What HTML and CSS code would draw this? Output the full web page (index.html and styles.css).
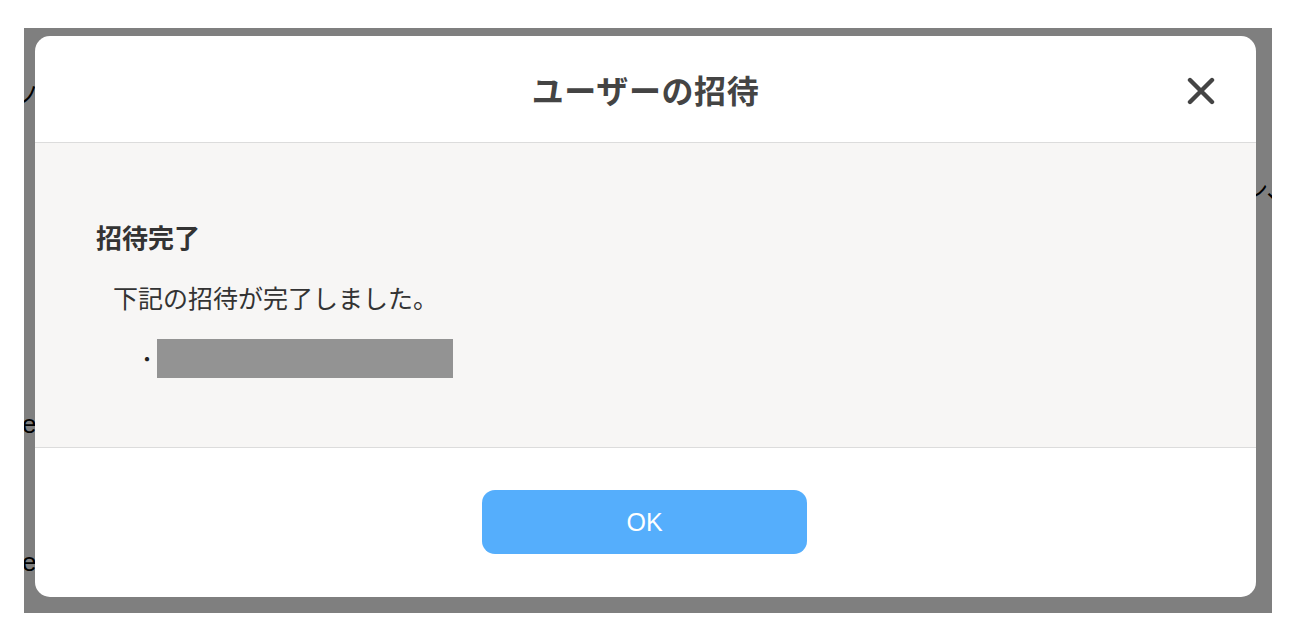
FILE: index.html
```html
<!DOCTYPE html>
<html lang="ja">
<head>
<meta charset="utf-8">
<title>ユーザーの招待</title>
<link rel="stylesheet" href="styles.css">
</head>
<body>
<div class="page">
  <span class="frag frag-a">ノ</span>
  <span class="frag frag-b">ン、</span>
  <span class="frag frag-c">e</span>
  <span class="frag frag-d">e</span>
</div>
<div class="backdrop">
  <div class="modal">
    <header class="modal-header">
      <h1 class="modal-title">ユーザーの招待</h1>
      <button class="close" aria-label="閉じる">
        <svg width="28" height="28" viewBox="0 0 28 28"><path d="M3 3 L25 25 M25 3 L3 25" stroke="#444" stroke-width="4.4" stroke-linecap="round" fill="none"/></svg>
      </button>
    </header>
    <section class="modal-body">
      <h2 class="done-title">招待完了</h2>
      <p class="done-text">下記の招待が完了しました。</p>
      <ul class="list">
        <li class="list-item"><span class="dot">・</span><span class="masked"></span></li>
      </ul>
    </section>
    <footer class="modal-footer">
      <button class="ok">OK</button>
    </footer>
  </div>
</div>
</body>
</html>
```
FILE: styles.css
```css
html, body {
  margin: 0;
  padding: 0;
  background: #fff;
}
body {
  width: 1290px;
  height: 638px;
  overflow: hidden;
  font-family: "Noto Sans CJK JP", "Noto Sans", sans-serif;
  position: relative;
}
.page {
  position: absolute;
  left: 24px;
  top: 28px;
  width: 1248px;
  height: 585px;
  overflow: hidden;
}
.frag {
  position: absolute;
  color: #000;
  font-family: "Liberation Sans", "Noto Sans CJK JP", sans-serif;
  font-size: 26px;
  line-height: 1;
}
.frag-a { left: -8px; top: 54px; font-family: "Noto Sans CJK JP", sans-serif; font-size: 24px; }
.frag-b { left: 1220px; top: 148px; font-family: "Noto Sans CJK JP", sans-serif; font-size: 24px; }
.frag-c { left: -2px; top: 383px; }
.frag-d { left: -2px; top: 521px; }

.backdrop {
  position: absolute;
  left: 24px;
  top: 28px;
  width: 1248px;
  height: 585px;
  background: rgba(0, 0, 0, 0.5);
  box-sizing: border-box;
  padding: 8px 16px 16px 11px;
  display: flex;
}
.modal {
  flex: 1;
  background: #fff;
  border-radius: 15px;
  overflow: hidden;
  display: flex;
  flex-direction: column;
}
.modal-header {
  height: 106px;
  border-bottom: 1px solid #dcdcdc;
  display: flex;
  align-items: center;
  justify-content: center;
  position: relative;
}
.modal-title {
  margin: 0;
  font-size: 32px;
  font-weight: 700;
  color: #444;
  letter-spacing: 0.6px;
}
.close {
  position: absolute;
  right: 41px;
  top: 41px;
  width: 28px;
  height: 28px;
  padding: 0;
  border: 0;
  background: none;
  display: flex;
}
.modal-body {
  height: 305px;
  box-sizing: border-box;
  background: #f7f6f5;
  border-bottom: 1px solid #dcdcdc;
  padding: 74px 0 0 61px;
}
.done-title {
  margin: 0;
  font-size: 26px;
  font-weight: 700;
  color: #333;
  line-height: 40px;
}
.done-text {
  margin: 22px 0 0 17px;
  font-size: 25px;
  color: #333;
  line-height: 36px;
}
.list {
  list-style: none;
  margin: 24px 0 0 0;
  padding: 0 0 0 37px;
}
.list-item {
  display: flex;
  align-items: center;
  height: 39px;
}
.dot {
  font-size: 20px;
  color: #222;
  width: 24px;
  text-align: right;
}
.masked {
  display: block;
  width: 296px;
  height: 39px;
  background: #939393;
}
.modal-footer {
  flex: 1;
  display: flex;
  justify-content: center;
  align-items: flex-start;
  padding-top: 42px;
}
.ok {
  width: 325px;
  height: 64px;
  border: 0;
  border-radius: 13px;
  background: #55aefc;
  color: #fff;
  font-family: "Liberation Sans", Arial, sans-serif;
  font-size: 25px;
  padding: 0 0 0 0;
  margin-left: -2px;
}
```
